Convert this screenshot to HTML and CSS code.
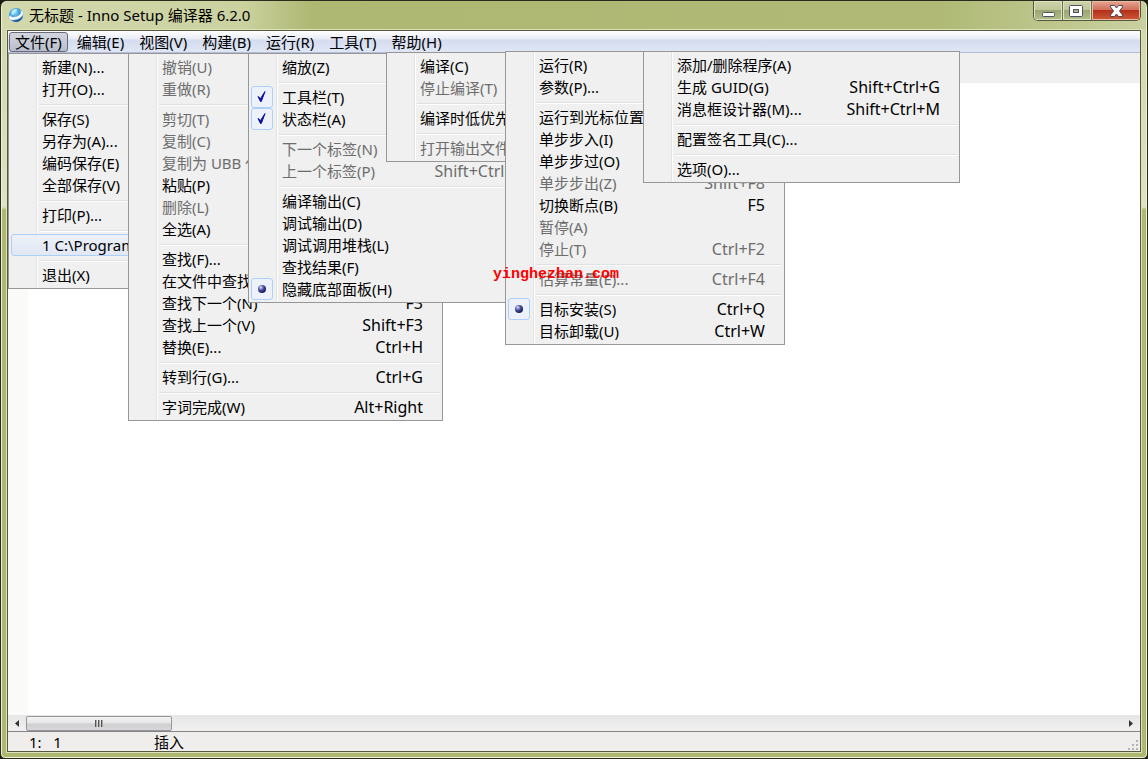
FILE: index.html
```html
<!DOCTYPE html>
<html lang="zh-CN">
<head>
<meta charset="utf-8">
<title>无标题 - Inno Setup 编译器 6.2.0</title>
<link rel="stylesheet" href="styles.css">
</head>
<body>
<div class="window">
  <header class="titlebar">
    <svg class="app-icon" viewBox="0 0 16 16" width="16" height="16" aria-hidden="true">
      <defs>
        <radialGradient id="globe" cx="40%" cy="30%" r="75%">
          <stop offset="0" stop-color="#9be6f8"/>
          <stop offset="0.5" stop-color="#3596d6"/>
          <stop offset="1" stop-color="#0d3f8c"/>
        </radialGradient>
      </defs>
      <circle cx="8" cy="8" r="7" fill="url(#globe)"/>
      <path d="M3.500 5Q5 1.500 9 2Q9 4.500 7 5.500Q6 7.500 3.500 8Z" fill="#b6eff8"/>
      <path d="M12 3.500Q16 3.500 15.300 7Q13.500 12 6.500 13Q0.500 13.500 0.700 10.500Q0.900 9 2.500 8Q2.500 10.300 6 10Q11.500 9 13 6Q13 4.500 12 3.500Z" fill="#f4fbff" stroke="#7fb0d8" stroke-width="0.500"/>
    </svg>
    <h1 class="title">无标题 - Inno Setup 编译器 6.2.0</h1>
    <div class="controls">
      <button class="control" aria-label="最小化">
        <svg viewBox="0 0 28 20" width="28" height="20"><rect x="8.500" y="11.500" width="12" height="4" rx="1" fill="#fff" stroke="#4c5366"/></svg>
      </button>
      <button class="control" aria-label="最大化">
        <svg viewBox="0 0 28 20" width="28" height="20"><rect x="6.500" y="4.500" width="13" height="11" rx="1" fill="#fff" stroke="#4c5366"/><rect x="10.500" y="8.500" width="5" height="3" fill="#a9b580" stroke="#4c5366"/></svg>
      </button>
      <button class="control close" aria-label="关闭">
        <svg viewBox="0 0 48 20" width="48" height="20"><path d="M18.500 4.500H22.500L24.500 7L26.500 4.500H30.500V6L27.500 10L30.500 14V15.500H26.500L24.500 13L22.500 15.500H18.500V14L21.500 10L18.500 6Z" fill="#fff" stroke="#4c4656"/></svg>
      </button>
    </div>
  </header>

  <div class="client">
    <nav class="menubar">
      <button class="menu-button open">文件(F)</button>
      <button class="menu-button">编辑(E)</button>
      <button class="menu-button">视图(V)</button>
      <button class="menu-button">构建(B)</button>
      <button class="menu-button">运行(R)</button>
      <button class="menu-button">工具(T)</button>
      <button class="menu-button">帮助(H)</button>
    </nav>
    <div class="toolbar"></div>
    <main class="editor"></main>
    <div class="scrollbar">
      <button class="arrow" aria-label="向左滚动"><svg viewBox="0 0 4 7" width="4" height="7"><path d="M4 0V7L0 3.500Z" fill="#333"/></svg></button>
      <div class="thumb"><i></i><i></i><i></i></div>
      <button class="arrow" aria-label="向右滚动"><svg viewBox="0 0 4 7" width="4" height="7"><path d="M0 0V7L4 3.500Z" fill="#333"/></svg></button>
    </div>
    <footer class="status">
      <span class="caret-position">1:&nbsp;&nbsp; 1</span>
      <span class="mode">插入</span>
      <svg class="grip" viewBox="0 0 12 12" width="12" height="12" fill="#b4b4b4" aria-hidden="true"><path d="M8 1h2v2H8zM4 5h2v2H4zM8 5h2v2H8zM0 9h2v2H0zM4 9h2v2H4zM8 9h2v2H8z"/></svg>
    </footer>
  </div>
</div>

<div class="menu menu-file">
  <button class="item">新建(N)...</button>
  <button class="item">打开(O)...</button>
  <hr>
  <button class="item">保存(S)</button>
  <button class="item">另存为(A)...</button>
  <button class="item">编码保存(E)</button>
  <button class="item">全部保存(V)</button>
  <hr>
  <button class="item">打印(P)...</button>
  <hr>
  <button class="item hot">1 C:\Program Files</button>
  <hr>
  <button class="item">退出(X)</button>
</div>

<div class="menu menu-edit">
  <button class="item" disabled>撤销(U)</button>
  <button class="item" disabled>重做(R)</button>
  <hr>
  <button class="item" disabled>剪切(T)</button>
  <button class="item" disabled>复制(C)</button>
  <button class="item" disabled>复制为 UBB 代码(B)</button>
  <button class="item">粘贴(P)</button>
  <button class="item" disabled>删除(L)</button>
  <button class="item">全选(A)</button>
  <hr>
  <button class="item">查找(F)...</button>
  <button class="item">在文件中查找(I)...</button>
  <button class="item">查找下一个(N)<kbd>F3</kbd></button>
  <button class="item">查找上一个(V)<kbd>Shift+F3</kbd></button>
  <button class="item">替换(E)...<kbd>Ctrl+H</kbd></button>
  <hr>
  <button class="item">转到行(G)...<kbd>Ctrl+G</kbd></button>
  <hr>
  <button class="item">字词完成(W)<kbd>Alt+Right</kbd></button>
</div>

<div class="menu menu-view">
  <button class="item">缩放(Z)</button>
  <hr>
  <button class="item"><svg class="mark" viewBox="0 0 20 20" width="22" height="22"><path d="M6 9.500L8.500 11.500L13 4.500L9.300 14.500H8.500Z" fill="#0c12a1" stroke="#0c12a1"/></svg>工具栏(T)</button>
  <button class="item"><svg class="mark" viewBox="0 0 20 20" width="22" height="22"><path d="M6 9.500L8.500 11.500L13 4.500L9.300 14.500H8.500Z" fill="#0c12a1" stroke="#0c12a1"/></svg>状态栏(A)</button>
  <hr>
  <button class="item" disabled>下一个标签(N)</button>
  <button class="item" disabled>上一个标签(P)<kbd>Shift+Ctrl+Tab</kbd></button>
  <hr>
  <button class="item">编译输出(C)</button>
  <button class="item">调试输出(D)</button>
  <button class="item">调试调用堆栈(L)</button>
  <button class="item">查找结果(F)</button>
  <button class="item"><svg class="mark" viewBox="0 0 20 20" width="22" height="22"><defs><radialGradient id="dot" cx="35%" cy="30%" r="70%"><stop offset="0" stop-color="#dfe3ff"/><stop offset="0.500" stop-color="#4a509c"/><stop offset="1" stop-color="#15185c"/></radialGradient></defs><circle cx="10" cy="10" r="4" fill="url(#dot)"/></svg>隐藏底部面板(H)</button>
</div>

<div class="menu menu-build">
  <button class="item">编译(C)</button>
  <button class="item" disabled>停止编译(T)</button>
  <hr>
  <button class="item">编译时低优先级(L)</button>
  <hr>
  <button class="item" disabled>打开输出文件夹(F)</button>
</div>

<div class="menu menu-run">
  <button class="item">运行(R)</button>
  <button class="item">参数(P)...</button>
  <hr>
  <button class="item">运行到光标位置(H)</button>
  <button class="item">单步步入(I)</button>
  <button class="item">单步步过(O)</button>
  <button class="item" disabled>单步步出(Z)<kbd>Shift+F8</kbd></button>
  <button class="item">切换断点(B)<kbd>F5</kbd></button>
  <button class="item" disabled>暂停(A)</button>
  <button class="item" disabled>停止(T)<kbd>Ctrl+F2</kbd></button>
  <hr>
  <button class="item" disabled>估算常量(E)...<kbd>Ctrl+F4</kbd></button>
  <hr>
  <button class="item"><svg class="mark" viewBox="0 0 20 20" width="22" height="22"><circle cx="10" cy="10" r="4" fill="url(#dot)"/></svg>目标安装(S)<kbd>Ctrl+Q</kbd></button>
  <button class="item">目标卸载(U)<kbd>Ctrl+W</kbd></button>
</div>

<div class="menu menu-tools">
  <button class="item">添加/删除程序(A)</button>
  <button class="item">生成 GUID(G)<kbd>Shift+Ctrl+G</kbd></button>
  <button class="item">消息框设计器(M)...<kbd>Shift+Ctrl+M</kbd></button>
  <hr>
  <button class="item">配置签名工具(C)...</button>
  <hr>
  <button class="item">选项(O)...</button>
</div>

<div class="watermark">yinghezhan.com</div>
</body>
</html>
```

FILE: styles.css
```css
* { box-sizing: border-box; }

body {
  margin: 0;
  height: 100vh;
  overflow: hidden;
  position: relative;
  background: #1c1d12;
  color: #000;
  font: 15px/22px "Noto Sans", "Noto Sans CJK SC", sans-serif;
}

button { border: 0; padding: 0; margin: 0; background: none; font: inherit; color: inherit; }
svg { display: block; }

.window {
  height: 100%;
  display: flex;
  flex-direction: column;
  padding: 0 6px 6px;
  border: 1px solid #2b2d1c;
  border-radius: 7px 7px 5px 5px;
  box-shadow: inset 0 0 0 1px #eff2d8;
  background: linear-gradient(#d0d6a8 0, #dfe2c4 206px, #afb871 209px, #afb871 100%);
}

.titlebar {
  height: 28px;
  flex: none;
  display: flex;
  align-items: center;
  margin: 0 -5px 1px;
  padding: 0 5px 0 6px;
  gap: 5px;
  border-radius: 6px 6px 0 0;
  background: linear-gradient(90deg, #d3d8ac 0, #cbd2a0 240px, #aeb873 310px, #b0ba76 82%, #c9d09f 100%);
}
.title { margin: 0; font-size: 15px; font-weight: 400; }

.controls {
  display: flex;
  align-self: flex-start;
  margin-left: auto;
  border: 1px solid #53593a;
  border-top: 0;
  border-radius: 0 0 5px 5px;
  overflow: hidden;
}
.control {
  height: 19px;
  background: linear-gradient(#cdd3ac 0, #bfc79a 45%, #9aa571 50%, #b4be87 100%);
  box-shadow: inset 0 0 0 1px #dde2c2;
}
.control + .control { border-left: 1px solid #6a7150; }
.control.close {
  background: linear-gradient(#e5a794 0, #d3705a 45%, #b4301a 50%, #cd5a38 100%);
  box-shadow: inset 0 0 0 1px #ecb8a6;
}

.client {
  flex: 1;
  display: flex;
  flex-direction: column;
  border: 1px solid #55593e;
  background: #fff;
  box-shadow: 0 0 0 1px #dde2bc;
}

.menubar {
  flex: none;
  display: flex;
  height: 22px;
  padding: 1px 0 0 1px;
  gap: 3px;
  border-bottom: 1px solid #b6bcd8;
  background: linear-gradient(#fff 0, #e8ecf6 8px, #d5dcef 9px, #dfe6f5 100%);
}
.menu-button { height: 20px; padding: 0 5px; line-height: 18px; border: 1px solid transparent; }
.menu-button.open {
  border-color: #6a6d78;
  border-radius: 3px;
  background: linear-gradient(#d3d6df, #b9becf);
}

.toolbar { flex: none; height: 30px; background: #f0f0f0; }
.editor { flex: 1; background: linear-gradient(90deg, #fafaf8 20px, #fff 20px); }

.scrollbar {
  flex: none;
  display: flex;
  align-items: center;
  height: 16px;
  background: linear-gradient(#e6e6e6, #f0f0f0);
}
.arrow { width: 18px; display: flex; justify-content: center; }
.thumb {
  width: 146px;
  height: 15px;
  margin-right: auto;
  display: flex;
  gap: 1px;
  align-items: center;
  justify-content: center;
  border: 1px solid #979797;
  border-radius: 2px;
  background: linear-gradient(#f4f4f4 0, #e6e6e6 48%, #cfcfd1 52%, #d8d8da 100%);
}
.thumb i { width: 2px; height: 7px; border-left: 1px solid #555; background: #aaa; }

.status {
  flex: none;
  display: flex;
  align-items: center;
  height: 20px;
  border-top: 1px solid #858585;
  background: #f0eeed;
}
.caret-position { width: 146px; padding-left: 21px; }
.grip { margin: auto 0 0 auto; }

.menu {
  position: absolute;
  padding: 2px;
  border: 1px solid #979797;
  background-color: #f0f0f0;
  background-image: linear-gradient(90deg, transparent 28px, #e2e3e3 28px, #e2e3e3 29px, #fff 29px, #fff 30px, transparent 30px);
  background-origin: border-box;
}
.menu hr {
  height: 2px;
  margin: 4px 0 2px 28px;
  border: 0;
  border-top: 1px solid #e0e0e0;
  background: #fff;
}
.item {
  position: relative;
  display: flex;
  width: 100%;
  height: 22px;
  padding: 0 17px 0 31px;
  white-space: nowrap;
  text-align: left;
}
.item:disabled { color: #6d6d6d; }
.item kbd { margin-left: auto; font: inherit; font-size: 16px; }
.item.hot {
  padding-left: 30px;
  line-height: 20px;
  border: 1px solid #aecff7;
  border-radius: 3px;
  background: linear-gradient(rgba(236, 241, 250, 0.8), rgba(220, 230, 246, 0.8));
}
.mark {
  position: absolute;
  left: 0;
  top: 0;
  border: 1px solid #aecff7;
  border-radius: 3px;
  background: #edf1f9;
}

.menu-file { left: 8px; top: 53px; width: 200px; }
.menu-edit { left: 128px; top: 53px; width: 315px; }
.menu-view { left: 248px; top: 53px; width: 312px; }
.menu-build { left: 386px; top: 52px; width: 240px; }
.menu-run { left: 505px; top: 51px; width: 280px; }
.menu-tools { left: 643px; top: 51px; width: 317px; }

.watermark {
  position: absolute;
  left: 493px;
  top: 264px;
  color: #f00;
  font: bold 15px/22px "Liberation Mono", monospace;
}
```
